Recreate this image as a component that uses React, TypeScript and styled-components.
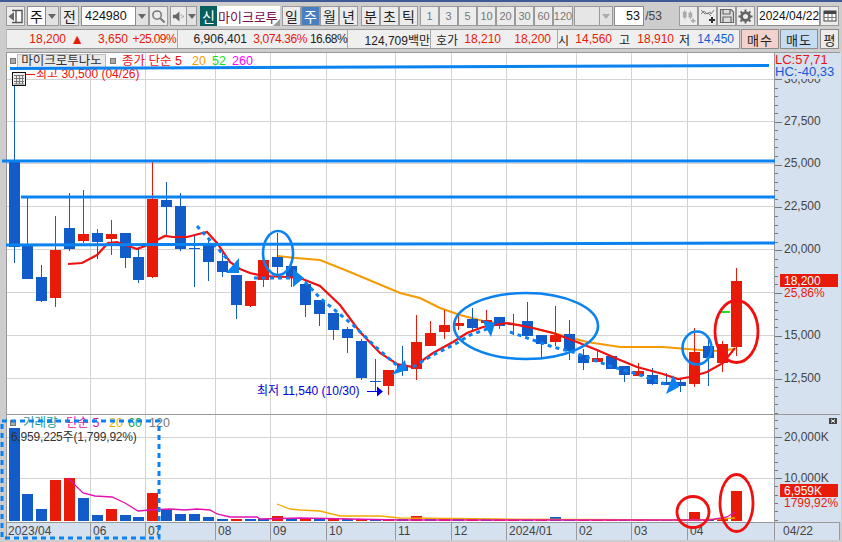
import React from 'react';
import styled, { createGlobalStyle } from 'styled-components';

const FONT = '"Liberation Sans", "Noto Sans CJK KR", sans-serif';
const BLUE = '#115cc9';
const RED = '#e81a08';
const LINE = '#0a82f0';

const GlobalStyle = createGlobalStyle`
  html, body { margin: 0; padding: 0; background: #cdcdcd; }
`;

// bodyTop, bodyBottom, wickTop, wickBottom, colour
const candles: [number, number, number, number, string][] = [
  [161, 247, 73, 263, 'b'], [245, 279, 198, 279, 'b'], [277, 301, 265, 302, 'b'], [250, 298, 216, 307, 'r'],
  [228, 249, 193, 251, 'b'], [234, 241, 190, 243, 'r'], [233, 242, 229, 259, 'b'], [234, 239, 220, 255, 'r'],
  [233, 258, 233, 268, 'b'], [257, 280, 247, 283, 'b'], [199, 277, 162, 278, 'r'], [200, 207, 182, 237, 'b'],
  [206, 249, 193, 251, 'b'], [248, 249, 234, 287, 'b'], [243, 262, 240, 281, 'b'], [261, 272, 253, 277, 'b'],
  [275, 305, 275, 319, 'b'], [281, 306, 281, 307, 'r'], [260, 280, 260, 287, 'r'], [257, 267, 233, 275, 'b'],
  [266, 277, 266, 287, 'b'], [284, 305, 280, 317, 'b'], [300, 314, 300, 326, 'b'], [313, 330, 313, 340, 'b'],
  [329, 338, 327, 353, 'b'], [341, 378, 339, 380, 'b'], [381, 382, 359, 391, 'b'], [370, 386, 370, 395, 'r'],
  [365, 371, 346, 376, 'b'], [342, 369, 315, 380, 'r'], [333, 346, 321, 346, 'r'], [325, 332, 310, 339, 'r'],
  [323, 326, 313, 330, 'r'], [319, 328, 308, 330, 'b'], [320, 323, 310, 326, 'r'], [317, 326, 317, 329, 'b'],
  [324, 325, 314, 335, 'b'], [321, 336, 302, 336, 'b'], [335, 344, 335, 359, 'b'], [335, 342, 306, 346, 'r'],
  [334, 351, 320, 360, 'b'], [355, 363, 349, 370, 'b'], [358, 362, 350, 362, 'r'], [356, 369, 356, 369, 'b'],
  [366, 375, 366, 382, 'b'], [371, 376, 363, 376, 'r'], [375, 384, 368, 385, 'b'], [382, 385, 373, 385, 'b'],
  [382, 386, 378, 392, 'b'], [352, 384, 328, 387, 'r'], [346, 358, 340, 386, 'b'], [344, 363, 341, 372, 'r'],
  [281, 347, 268, 356, 'r'],
];

const volumeTops = [
  428, 494, 509, 480, 478, 498, 515, 509, 515, 517, 493, 509, 514, 514, 517, 519, 519, 519, 519, 516, 519,
  519, 519, 519, 519, 519, 519, 519, 519, 516, 519, 519, 519, 518, 519, 519, 519, 519, 519, 517, 519, 519,
  519, 519, 520, 520, 520, 520, 520, 512, 519, 519, 491,
];
const volumeColors = 'bbbrrbbrbbrbbbbbrbbrbrbrbrbrbrbrbrbrrbrbbrrrbrbbrrbrr';

const redAverage = '68,264 82,263 97,255 108,243 117,242 137,249 145,246 157,240 165,236 173,237 187,237 207,232 217,243 230,262 240,269 250,273 263,276 287,277 300,278 320,286 340,305 360,332 380,353 397,364 413,367 433,353 453,342 467,333 483,327 507,323 533,328 553,333 577,342 597,350 620,360 637,367 663,374 678,379 690,377 707,372 723,363 735,348';
const orangeAverage = '277,256 296,258 320,260 350,272 400,293 420,298 440,308 460,315 487,322 520,325 553,333 587,342 620,347 663,347 687,349 713,351 735,349';
const volumeMagenta = '68,478 83,493 95,496 112,497 125,503 138,511 150,510 170,509 185,510 197,509 210,510 217,514 230,517 257,517 260,519 300,518 400,520 560,520 710,520 727,517 735,512';
const volumeOrange = '277,504 290,509 300,510 320,511 340,516 380,516 400,518 500,519 700,520 735,518';

// 17,500 sits under the 25,86% label in the reference, so it has no label of its own
const priceTicks = [
  [79, '30,000'], [121, '27,500'], [163, '25,000'], [206, '22,500'],
  [249, '20,000'], [292, ''], [335, '15,000'], [378, '12,500'],
] as [number, string][];
const months = [
  [90, '06'], [145, '07'], [215, '08'], [270, '09'], [326, '10'], [395, '11'],
  [451, '12'], [506, '2024/01'], [576, '02'], [631, '03'], [687, '04'],
] as [number, string][];
const gridX = months.map((m) => m[0]);

const candleX = (i: number) => Math.round(13.5 + 13.885 * i);
const colorOf = (c: string) => (c === 'b' ? BLUE : RED);

function Candles() {
  return (
    <g shapeRendering="crispEdges">
      {candles.map(([top, bottom, high, low, c], i) => (
        <g key={i} fill={colorOf(c)}>
          <rect x={candleX(i)} y={high} width={1} height={low - high} />
          <rect x={candleX(i) - 5} y={top} width={11} height={bottom - top} />
        </g>
      ))}
    </g>
  );
}

function PricePane() {
  return (
    <PaneRow>
      <PlotBox>
        <PlotSvg viewBox="7 53 767 361" width={767} height={361}>
          <g stroke="#d3d3d3" shapeRendering="crispEdges">
            {gridX.map((x) => <line key={x} x1={x + 0.5} x2={x + 0.5} y1={53} y2={414} />)}
            {priceTicks.map(([y]) => <line key={y} x1={7} x2={774} y1={y + 0.5} y2={y + 0.5} />)}
          </g>
          <polyline points={orangeAverage} fill="none" stroke="#f59a00" strokeWidth={2} />
          <Candles />
          <polyline points={redAverage} fill="none" stroke="#ee1111" strokeWidth={2.2} />
          <rect x={721} y={311} width={9} height={2} fill="#22dd22" />
          <ChartText x={257} y={395} fill="#0000d8">최저 11,540 (10/30)</ChartText>
          <path d="M367 391.5h11" stroke="#0000e0" />
          <path d="M377 386.5l6 5-6 5z" fill="#0000e0" />
        </PlotSvg>
        <PriceLegend>
          <LegendSquare />
          <StockTag>마이크로투나노</StockTag>
          <LegendSquare />
          <LegendText $c="#ee1111" $w={69} $ml={5}>종가 단순 5</LegendText>
          <LegendText $c="#f59a00" $w={19}>20</LegendText>
          <LegendText $c="#16e016" $w={19}>52</LegendText>
          <LegendText $c="#ff00ff" $w={24}>260</LegendText>
        </PriceLegend>
        <HighLabel>최고 30,500 (04/26)</HighLabel>
        <CalendarChip>
          <svg viewBox="0 0 14 14" width={14} height={14}>
            <rect x={0.5} y={0.5} width={13} height={13} fill="#eee" stroke="#111" />
            <path d="M2 3.5h10M2 6.5h10M2 9.5h10M2 12h10M4.5 3v9M7.5 3v9M10.5 3v9" stroke="#777" fill="none" />
          </svg>
        </CalendarChip>
      </PlotBox>
      <AxisSvg viewBox="774 53 66 361" width={66} height={361}>
        <g stroke="#777" shapeRendering="crispEdges">
          {Array.from({ length: 42 }, (_, i) => 79 + i * 8.56).map((y, i) => (
            <line key={y} x1={774} x2={i % 5 === 0 ? 781 : 777} y1={Math.round(y) + 0.5} y2={Math.round(y) + 0.5} />
          ))}
        </g>
        {priceTicks.filter(([, t]) => t).map(([y, t]) => <ChartText key={t} x={783} y={y + 4} fill="#444">{t}</ChartText>)}
        <rect x={779} y={274} width={58} height={13} fill={RED} />
        <ChartText x={783} y={285} fill="#fff">18,200</ChartText>
        <ChartText x={783} y={297} fill={RED}>25,86%</ChartText>
      </AxisSvg>
      <RatioLabels>
        <RatioLine $c="#ee1111">LC:57,71</RatioLine>
        <RatioLine $c="#1558d6">HC:-40,33</RatioLine>
      </RatioLabels>
    </PaneRow>
  );
}

function VolumePane() {
  return (
    <PaneRow>
      <PlotBox>
        <PlotSvg viewBox="7 415 767 107" width={767} height={107}>
          <g stroke="#d3d3d3" shapeRendering="crispEdges">
            {gridX.map((x) => <line key={x} x1={x + 0.5} x2={x + 0.5} y1={415} y2={522} />)}
            <line x1={7} x2={774} y1={437.5} y2={437.5} />
            <line x1={7} x2={774} y1={478.5} y2={478.5} />
          </g>
          <g shapeRendering="crispEdges">
            {volumeTops.map((top, i) => (
              <rect key={i} x={candleX(i) - 5} y={top} width={11} height={521 - top} fill={colorOf(volumeColors[i])} />
            ))}
          </g>
          <polyline points={volumeOrange} fill="none" stroke="#f0a800" strokeWidth={1.3} />
          <polyline points={volumeMagenta} fill="none" stroke="#e010b0" strokeWidth={1.3} />
        </PlotSvg>
        <VolumeLegend>
          <LegendSquare />
          <LegendText $c="#1a9a9a" $w={41} $ml={5}>거래량</LegendText>
          <LegendText $c="#e010b0" $w={41}>단순 5</LegendText>
          <LegendText $c="#f0a800" $w={17}>20</LegendText>
          <LegendText $c="#12a04a" $w={19}>60</LegendText>
          <LegendText $c="#777" $w={24}>120</LegendText>
        </VolumeLegend>
        <VolumeNote>6,959,225주(1,799,92%)</VolumeNote>
      </PlotBox>
      <AxisSvg viewBox="774 415 66 107" width={66} height={107}>
        <g stroke="#777" shapeRendering="crispEdges">
          {Array.from({ length: 13 }, (_, i) => 420 + i * 8.3).map((y) => {
            const major = Math.abs(y - 437) < 1 || Math.abs(y - 478.5) < 1;
            return <line key={y} x1={774} x2={major ? 781 : 777} y1={Math.round(y) + 0.5} y2={Math.round(y) + 0.5} />;
          })}
        </g>
        <ChartText x={783} y={441} fill="#444">20,000K</ChartText>
        <ChartText x={783} y={482} fill="#444">10,000K</ChartText>
        <rect x={779} y={484} width={58} height={13} fill={RED} />
        <ChartText x={783} y={495} fill="#fff">6,959K</ChartText>
        <ChartText x={783} y={507} fill={RED}>1799,92%</ChartText>
      </AxisSvg>
      <CloseChip>
        <svg viewBox="0 0 8 6" width={8} height={6}>
          <rect width={8} height={6} fill="#444" />
          <path d="M2 1.5l4 3M6 1.5l-4 3" stroke="#fff" />
        </svg>
      </CloseChip>
    </PaneRow>
  );
}

function TimeAxis() {
  return (
    <TimeRow>
      <TimeScale>
        <TimeStart>2023/04</TimeStart>
        {months.map(([x, t]) => <TimeTick key={t} $x={x}>{t}</TimeTick>)}
      </TimeScale>
      <TimeEnd>04/22</TimeEnd>
    </TimeRow>
  );
}

function Annotations() {
  return (
    <OverlaySvg viewBox="0 0 842 542" width={842} height={542}>
      <g stroke={LINE} strokeWidth={3} fill="none">
        <path d="M10 68.5L769 65.5" />
        <path d="M2 161H775" />
        <path d="M21 197H775" />
        <path d="M6 245L775 243" />
        <ellipse cx={278} cy={253} rx={15} ry={22} strokeWidth={2.6} />
        <ellipse cx={526} cy={326} rx={72} ry={33} strokeWidth={2.6} />
        <ellipse cx={697} cy={348} rx={14.5} ry={16.5} strokeWidth={2.6} />
      </g>
      <g stroke={LINE} strokeWidth={3} strokeDasharray="4 4" fill="none">
        <path d="M197 226L230 262" />
        <path d="M254 278H292" />
        <path d="M305 282L320 298L353 325L377 348L400 368" />
        <path d="M413 367L433 355L457 343L470 335L490 328" />
        <path d="M510 332L553 347L573 352L607 365L640 375L668 385" />
        <rect x={2} y={421} width={157} height={117} strokeDasharray="5 4" />
      </g>
      <g fill={LINE}>
        <path d="M239 258L226 273H239z" />
        <path d="M293 269V287L304 278z" />
        <path d="M405 360L391 375L407 370z" />
        <path d="M482 320L495 323L491 337z" />
        <path d="M673 375L666 394L679 387z" />
      </g>
      <g stroke="#f01010" strokeWidth={2.8} fill="none">
        <ellipse cx={736.5} cy={331.5} rx={21.5} ry={31} />
        <ellipse cx={693} cy={512} rx={16} ry={15.5} />
        <ellipse cx={736.5} cy={503} rx={16.5} ry={28.5} />
      </g>
    </OverlaySvg>
  );
}

export default function App() {
  return (
    <Page>
      <GlobalStyle />
      <Toolbar>
        <ToolButton $w={19}>
          <svg viewBox="0 0 15 15" width={15} height={15}>
            <path d="M4 1.5H14V13.5H4" fill="#fff" stroke="#555" strokeWidth={1.4} />
            <path d="M8 2V13" stroke="#555" strokeWidth={1.4} />
            <path d="M0.5 7.5L6 3V12z" fill="#666" />
          </svg>
        </ToolButton>
        <Field $w={19} $ml={2} $center>주</Field>
        <ArrowButton $w={13} />
        <ToolButton $w={19} $ml={1}>전</ToolButton>
        <Field $w={55} $ml={2}>424980</Field>
        <ArrowButton $w={13} />
        <ToolButton $w={19}>
          <svg viewBox="0 0 16 16" width={15} height={15}>
            <circle cx={6.5} cy={6.5} r={4.5} fill="none" stroke="#777" strokeWidth={1.6} />
            <path d="M10 10l4.5 4.5" stroke="#777" strokeWidth={2.2} />
          </svg>
        </ToolButton>
        <ToolButton $w={17} $ml={2}>
          <svg viewBox="0 0 14 14" width={13} height={13}>
            <path d="M1 5h3l4-3.5v11L4 9H1z" fill="#666" />
            <path d="M10 5v1M10 8v1M12 6v2" stroke="#777" />
          </svg>
        </ToolButton>
        <ArrowButton $w={10} />
        <BadgeLabel $ml={3}>신</BadgeLabel>
        <StockName>마이크로투</StockName>
        <ToolButton $w={19} $ml={2}>일</ToolButton>
        <ToolButton $w={19} $active>주</ToolButton>
        <ToolButton $w={19}>월</ToolButton>
        <ToolButton $w={19}>년</ToolButton>
        <ToolButton $w={19} $ml={3}>분</ToolButton>
        <ToolButton $w={19}>초</ToolButton>
        <ToolButton $w={19}>틱</ToolButton>
        {['1', '3', '5', '10', '20', '30', '60', '120'].map((n, i) => (
          <ToolButton key={n} $w={i === 7 ? 20 : 19} $ml={i === 0 ? 2 : 0} $muted>{n}</ToolButton>
        ))}
        <BlankField $w={26} $ml={1} />
        <ArrowButton $w={13} $muted />
        <Field $w={30} $ml={1} $right>53</Field>
        <PageTotal>/53</PageTotal>
        <ToolButton $w={19} $ml={16} $muted>
          <svg viewBox="0 0 16 16" width={15} height={15}>
            <path d="M4 1v10M10 2v9" stroke="#aaa" />
            <path d="M2 3h4v6H2zM8 4h4v5H8z" fill="#aaa" />
            <path d="M13 10v5M10.5 12.5h5" stroke="#aaa" strokeWidth={1.6} />
          </svg>
        </ToolButton>
        <ToolButton $w={19}>
          <svg viewBox="0 0 16 16" width={16} height={16}>
            <path d="M1 6l3-3 3 3 3-2 1 2 3-4M1 2l4 4 3-1 3 3" fill="none" stroke="#666" strokeWidth={0.8} />
            <path d="M12 9v6M9 12h6" stroke="#333" strokeWidth={2} />
          </svg>
        </ToolButton>
        <ToolButton $w={19}>
          <svg viewBox="0 0 16 16" width={16} height={16}>
            <path d="M1.5 1.5H12L14.5 4V14.5H1.5z" fill="#ddd" stroke="#666" strokeWidth={1.2} />
            <path d="M4 2V6H11V2M4 14V9H12V14" fill="none" stroke="#666" strokeWidth={1.2} />
          </svg>
        </ToolButton>
        <ToolButton $w={19}>
          <svg viewBox="0 0 16 16" width={15} height={15}>
            <circle cx={8} cy={8} r={4.2} fill="none" stroke="#666" strokeWidth={3} />
            <path d="M8 0.5v3M8 12.5v3M0.5 8h3M12.5 8h3M2.7 2.7l2.1 2.1M11.2 11.2l2.1 2.1M13.3 2.7l-2.1 2.1M4.8 11.2l-2.1 2.1" stroke="#666" strokeWidth={2} />
          </svg>
        </ToolButton>
        <Field $w={63} $ml={2} $small>2024/04/22</Field>
        <ToolButton $w={19}>
          <svg viewBox="0 0 14 14" width={14} height={14}>
            <rect x={1} y={2} width={12} height={10} fill="#fff" stroke="#444" />
            <rect x={1} y={2} width={12} height={3} fill="#444" />
            <path d="M5 5v7M9 5v7M1 8.5h12" stroke="#777" />
          </svg>
        </ToolButton>
      </Toolbar>
      <InfoRow>
        <InfoBar>
          <InfoCell $w={171}>
            <Val $w={59} $c={RED}>18,200</Val>
            <Val $w={18} $c={RED} $size={14}>▲</Val>
            <Val $w={44} $c={RED}>3,650</Val>
            <Val $w={48} $c={RED} $ls={-0.6}>+25.09%</Val>
          </InfoCell>
          <InfoCell $w={170}>
            <Val $w={69}>6,906,401</Val>
            <Val $w={60} $c={RED} $ls={-0.4}>3,074.36%</Val>
            <Val $w={40} $ls={-0.6}>16.68%</Val>
          </InfoCell>
          <InfoCell $w={83}>
            <Val $w={82}>124,709백만</Val>
          </InfoCell>
          <InfoCell $w={127}>
            <Val $w={27}>호가</Val>
            <Val $w={43} $c={RED}>18,210</Val>
            <Val $w={50} $c={RED}>18,200</Val>
          </InfoCell>
          <InfoCell $w={181} $last>
            <Val $w={10}>시</Val>
            <Val $w={44} $c={RED}>14,560</Val>
            <Val $w={18}>고</Val>
            <Val $w={44} $c={RED}>18,910</Val>
            <Val $w={16}>저</Val>
            <Val $w={44} $c={BLUE}>14,450</Val>
          </InfoCell>
        </InfoBar>
        <TradeButton $bg="#f3d2cc">매수</TradeButton>
        <TradeButton $bg="#c6dcf3">매도</TradeButton>
        <SmallTrade>평</SmallTrade>
      </InfoRow>
      <Chart>
        <PricePane />
        <VolumePane />
        <TimeAxis />
      </Chart>
      <Annotations />
    </Page>
  );
}

const Page = styled.div`
  position: relative;
  width: 842px;
  height: 542px;
  box-sizing: border-box;
  overflow: hidden;
  padding: 6px 0 0 6px;
  background: #cdcdcd;
  border-top: 2px solid #3f5a94;
  font-family: ${FONT};
  font-size: 12px;
  color: #222;
`;

const Toolbar = styled.div`
  display: flex;
  align-items: stretch;
  height: 20px;
  margin-top: -2px;
`;

const ToolButton = styled.div<{ $w: number; $ml?: number; $active?: boolean; $muted?: boolean }>`
  width: ${(p) => p.$w}px;
  margin-left: ${(p) => p.$ml || 0}px;
  box-sizing: border-box;
  display: flex;
  align-items: center;
  justify-content: center;
  border: 1px solid #9a9a9a;
  background: ${(p) => (p.$active ? '#4a7fbf' : '#ececec')};
  color: ${(p) => (p.$active ? '#fff' : p.$muted ? '#777' : '#222')};
  font-size: ${(p) => (p.$muted ? 11 : 14)}px;
  overflow: hidden;
  white-space: nowrap;
`;

const ArrowButton = styled.div<{ $w: number; $muted?: boolean }>`
  width: ${(p) => p.$w}px;
  box-sizing: border-box;
  display: flex;
  align-items: center;
  justify-content: center;
  border: 1px solid #9a9a9a;
  border-left: 0;
  background: #e2e2e2;
  &::after {
    content: '';
    border-left: 4px solid transparent;
    border-right: 4px solid transparent;
    border-top: 5px solid ${(p) => (p.$muted ? '#aaa' : '#666')};
  }
`;

const Field = styled.div<{ $w: number; $ml?: number; $center?: boolean; $right?: boolean; $small?: boolean }>`
  width: ${(p) => p.$w}px;
  margin-left: ${(p) => p.$ml || 0}px;
  box-sizing: border-box;
  display: flex;
  align-items: center;
  justify-content: ${(p) => (p.$center ? 'center' : p.$right ? 'flex-end' : 'flex-start')};
  padding: 0 ${(p) => (p.$small ? 1 : 3)}px;
  border: 1px solid #8c8c8c;
  background: #fff;
  color: #111;
  font-size: ${(p) => (p.$center ? 14 : p.$small ? 12 : 12.5)}px;
  white-space: nowrap;
`;

const BlankField = styled.div<{ $w: number; $ml?: number }>`
  width: ${(p) => p.$w}px;
  margin-left: ${(p) => p.$ml || 0}px;
  box-sizing: border-box;
  border: 1px solid #9a9a9a;
  background: #e6e6e6;
`;

const BadgeLabel = styled.div<{ $ml?: number }>`
  width: 17px;
  margin-left: ${(p) => p.$ml || 0}px;
  display: flex;
  align-items: center;
  justify-content: center;
  background: #07605f;
  color: #fff;
  font-size: 14px;
`;

const StockName = styled.div`
  position: relative;
  width: 63px;
  box-sizing: border-box;
  display: flex;
  align-items: center;
  padding-left: 1px;
  background: #fff;
  color: #7a0f4a;
  font-size: 13px;
  white-space: nowrap;
  overflow: hidden;
  &::after {
    content: '';
    position: absolute;
    right: 0;
    bottom: 0;
    border-left: 7px solid transparent;
    border-bottom: 7px solid #999;
  }
`;

const PageTotal = styled.span`
  width: 19px;
  display: flex;
  align-items: center;
  justify-content: center;
  color: #444;
  font-size: 12px;
`;

const InfoRow = styled.div`
  display: flex;
  align-items: stretch;
  height: 20px;
  margin-top: 3px;
  width: 834px;
`;

const InfoBar = styled.div`
  width: 734px;
  box-sizing: border-box;
  display: flex;
  background: #efefef;
  border: 1px solid #9a9a9a;
  border-left: 1px solid #bbb;
`;

const InfoCell = styled.div<{ $w: number; $last?: boolean }>`
  width: ${(p) => p.$w}px;
  flex: none;
  box-sizing: border-box;
  display: flex;
  align-items: center;
  border-right: ${(p) => (p.$last ? '0' : '1px solid #aaa')};
`;

const Val = styled.span<{ $w: number; $c?: string; $ls?: number; $size?: number }>`
  width: ${(p) => p.$w}px;
  flex: none;
  text-align: right;
  color: ${(p) => p.$c || '#222'};
  letter-spacing: ${(p) => p.$ls || 0}px;
  font-size: ${(p) => p.$size || 12}px;
  white-space: nowrap;
`;

const TradeButton = styled.div<{ $bg: string }>`
  width: 38px;
  margin-left: 1px;
  box-sizing: border-box;
  display: flex;
  align-items: center;
  justify-content: center;
  border: 1px solid #8c8c8c;
  background: ${(p) => p.$bg};
  font-size: 13px;
  letter-spacing: 1px;
`;

const SmallTrade = styled.div`
  width: 19px;
  margin-left: 2px;
  box-sizing: border-box;
  display: flex;
  align-items: center;
  justify-content: center;
  border: 1px solid #8c8c8c;
  background: #ececec;
  font-size: 13px;
`;

const Chart = styled.div`
  width: 834px;
  margin-top: 3px;
  box-sizing: border-box;
  border: 1px solid #999;
  border-bottom: 0;
  background: #fff;
`;

const PaneRow = styled.div`
  position: relative;
  display: flex;
  border-bottom: 1px solid #999;
`;

const PlotBox = styled.div`
  position: relative;
  width: 767px;
  flex: none;
  overflow: hidden;
`;

const PlotSvg = styled.svg`
  display: block;
`;

const AxisSvg = styled.svg`
  display: block;
  flex: none;
  box-sizing: content-box;
  background: #d6e1ef;
  border-left: 1px solid #999;
  margin-right: -1px;
`;

const ChartText = styled.text`
  font-family: ${FONT};
  font-size: 12px;
`;

const PriceLegend = styled.div`
  position: absolute;
  top: 1px;
  left: 3px;
  display: flex;
  align-items: center;
  gap: 1px;
  height: 14px;
  line-height: 14px;
  font-size: 12.5px;
`;

const VolumeLegend = styled(PriceLegend)`
  top: 1px;
  gap: 2px;
`;

const LegendSquare = styled.i`
  width: 6px;
  height: 6px;
  box-sizing: border-box;
  border: 1px solid #777;
  background: #aaa;
`;

const StockTag = styled.span`
  box-sizing: border-box;
  width: 89px;
  height: 14px;
  line-height: 12px;
  text-align: center;
  border: 1px solid #bbb;
  background: #e9e9e9;
  color: #333;
  font-size: 12.5px;
  margin-right: 3px;
`;

const LegendText = styled.span<{ $c: string; $w: number; $ml?: number }>`
  width: ${(p) => p.$w}px;
  margin-left: ${(p) => p.$ml || 0}px;
  color: ${(p) => p.$c};
  white-space: nowrap;
`;

const HighLabel = styled.span`
  position: absolute;
  top: 14px;
  left: 19px;
  height: 14px;
  line-height: 14px;
  color: #ee1111;
  white-space: nowrap;
  &::before {
    content: '';
    display: inline-block;
    width: 9px;
    height: 1px;
    margin-right: 1px;
    vertical-align: middle;
    background: #ee1111;
  }
`;

const CalendarChip = styled.div`
  position: absolute;
  top: 19px;
  left: 5px;
  line-height: 0;
`;

const VolumeNote = styled.span`
  position: absolute;
  top: 15px;
  left: 4px;
  height: 14px;
  line-height: 14px;
  color: #333;
  letter-spacing: -0.2px;
  white-space: nowrap;
`;

const RatioLabels = styled.div`
  position: absolute;
  top: 1px;
  left: 768px;
  background: #d6e1ef;
  line-height: 12px;
  padding-bottom: 1px;
`;

const RatioLine = styled.div<{ $c: string }>`
  color: ${(p) => p.$c};
  font-size: 13px;
  white-space: nowrap;
`;

const CloseChip = styled.div`
  position: absolute;
  top: 3px;
  right: 2px;
  line-height: 0;
`;

const TimeRow = styled.div`
  display: flex;
  height: 17px;
  background: #d6e1ef;
`;

const TimeScale = styled.div`
  position: relative;
  width: 767px;
  flex: none;
  border-right: 1px solid #999;
  color: #444;
  line-height: 17px;
`;

const TimeStart = styled.span`
  padding-left: 1px;
`;

const TimeTick = styled.span<{ $x: number }>`
  position: absolute;
  top: 0;
  bottom: 0;
  left: ${(p) => p.$x - 7}px;
  padding-left: 2px;
  border-left: 1px solid #999;
`;

const TimeEnd = styled.span`
  padding-left: 8px;
  color: #444;
  line-height: 17px;
`;

const OverlaySvg = styled.svg`
  position: absolute;
  top: -2px;
  left: 0;
  pointer-events: none;
`;
